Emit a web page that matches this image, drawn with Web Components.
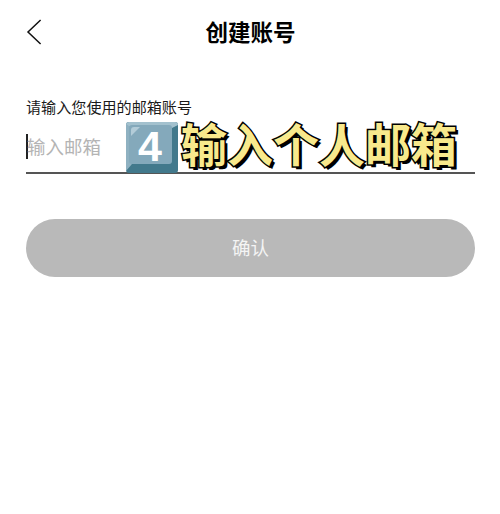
<!DOCTYPE html>
<html lang="zh">
<head>
<meta charset="utf-8">
<title>创建账号</title>
<style>
  html, body { margin: 0; height: 100%; background: #fff; }
  body { font-family: "Noto Sans CJK SC", "Noto Sans", sans-serif; overflow: hidden; }
</style>
</head>
<body>
<signup-page>
  <nav-bar slot="nav">创建账号</nav-bar>
  <email-field slot="field" label="请输入您使用的邮箱账号" placeholder="输入邮箱">
    <key-cap>4</key-cap>
    <step-caption>输入个人邮箱</step-caption>
  </email-field>
  <confirm-button slot="action">确认</confirm-button>
</signup-page>

<script>
class SignupPage extends HTMLElement {
  constructor() {
    super();
    this.attachShadow({ mode: "open" }).innerHTML = `
      <style>
        :host { display: flex; flex-direction: column; height: 514px; padding: 0 25px 0 26px; box-sizing: border-box; }
        .field { display: block; margin-top: 42px; }
        .action { display: block; margin-top: 45px; }
      </style>
      <slot name="nav"></slot>
      <div class="field"><slot name="field"></slot></div>
      <div class="action"><slot name="action"></slot></div>`;
  }
}

class NavBar extends HTMLElement {
  constructor() {
    super();
    this.attachShadow({ mode: "open" }).innerHTML = `
      <style>
        :host { display: grid; grid-template-columns: 1fr auto 1fr; align-items: center; height: 54px; padding-top: 10px; box-sizing: border-box; }
        svg { display: block; width: 16px; height: 28px; }
        .title { font-size: 22.5px; font-weight: 700; color: #000; line-height: 28px; margin-bottom: 2px; }
      </style>
      <svg viewBox="0 0 16 28"><path d="M14.6 2 2 14l12.6 12" fill="none" stroke="#111" stroke-width="1.5"/></svg>
      <div class="title"><slot></slot></div>
      <span></span>`;
  }
}

class EmailField extends HTMLElement {
  constructor() {
    super();
    this.attachShadow({ mode: "open" }).innerHTML = `
      <style>
        :host { display: block; }
        .label { font-size: 15.1px; line-height: 20px; color: #1a1a1a; }
        .row { position: relative; display: flex; align-items: center; height: 50px; margin-top: 6px; border-bottom: 2px solid #555; }
        .caret { width: 2px; height: 25px; background: #222; flex: none; margin-bottom: 2px; }
        .placeholder { font-size: 18.5px; line-height: 24px; color: #b4b4b4; margin: 0 0 3px -1px; }
        .overlay { position: absolute; left: 100px; bottom: -1px; display: flex; align-items: flex-end; gap: 4px; }
      </style>
      <div class="label"></div>
      <div class="row">
        <span class="caret"></span>
        <span class="placeholder"></span>
        <div class="overlay"><slot></slot></div>
      </div>`;
  }
  connectedCallback() {
    this.shadowRoot.querySelector(".label").textContent = this.getAttribute("label");
    this.shadowRoot.querySelector(".placeholder").textContent = this.getAttribute("placeholder");
  }
}

class KeyCap extends HTMLElement {
  constructor() {
    super();
    this.attachShadow({ mode: "open" }).innerHTML = `
      <style>
        :host { display: block; position: relative; width: 52px; height: 51px; flex: none; }
        svg { display: block; width: 100%; height: 100%; }
        .num { position: absolute; left: 0; right: 4px; top: 2px; bottom: 5px; display: flex; align-items: center; justify-content: center;
          font: 700 43px/1 "Liberation Sans", sans-serif; color: #fff; }
      </style>
      <svg viewBox="0 0 52 51">
        <rect width="52" height="51" rx="3" fill="#42798c"/>
        <path d="M0 3a3 3 0 0 1 3-3h46a3 3 0 0 1 3 3l-6 3H6L0 3z" fill="#a3c1ce"/>
        <path d="M0 2 6 6v36l-6 7z" fill="#8fb1c1"/>
        <rect x="3" y="3" width="43" height="39" rx="3" fill="#84a9bb"/>
        <path d="M5 14V8a3 3 0 0 1 3-3h6z" fill="#b3ccd8"/>
      </svg>
      <div class="num"><slot></slot></div>`;
  }
}

class StepCaption extends HTMLElement {
  constructor() {
    super();
    this.attachShadow({ mode: "open" }).innerHTML = `
      <style>
        :host { display: block; white-space: nowrap; font-size: 46px; font-weight: 700; line-height: 51px; color: #f8e98c; margin: 0 0 5px -1px;
          -webkit-text-stroke: 3px #000; paint-order: stroke fill; text-shadow: 3px 3px 0 #000; }
      </style>
      <slot></slot>`;
  }
}

class ConfirmButton extends HTMLElement {
  constructor() {
    super();
    this.attachShadow({ mode: "open" }).innerHTML = `
      <style>
        :host { display: flex; align-items: center; justify-content: center; height: 58px; padding-bottom: 2px; box-sizing: border-box; border-radius: 29px; background: #b9b9b9; color: #f4f4f4; font-size: 18.5px; }
      </style>
      <slot></slot>`;
  }
}

customElements.define("signup-page", SignupPage);
customElements.define("nav-bar", NavBar);
customElements.define("email-field", EmailField);
customElements.define("key-cap", KeyCap);
customElements.define("step-caption", StepCaption);
customElements.define("confirm-button", ConfirmButton);
</script>
</body>
</html>
